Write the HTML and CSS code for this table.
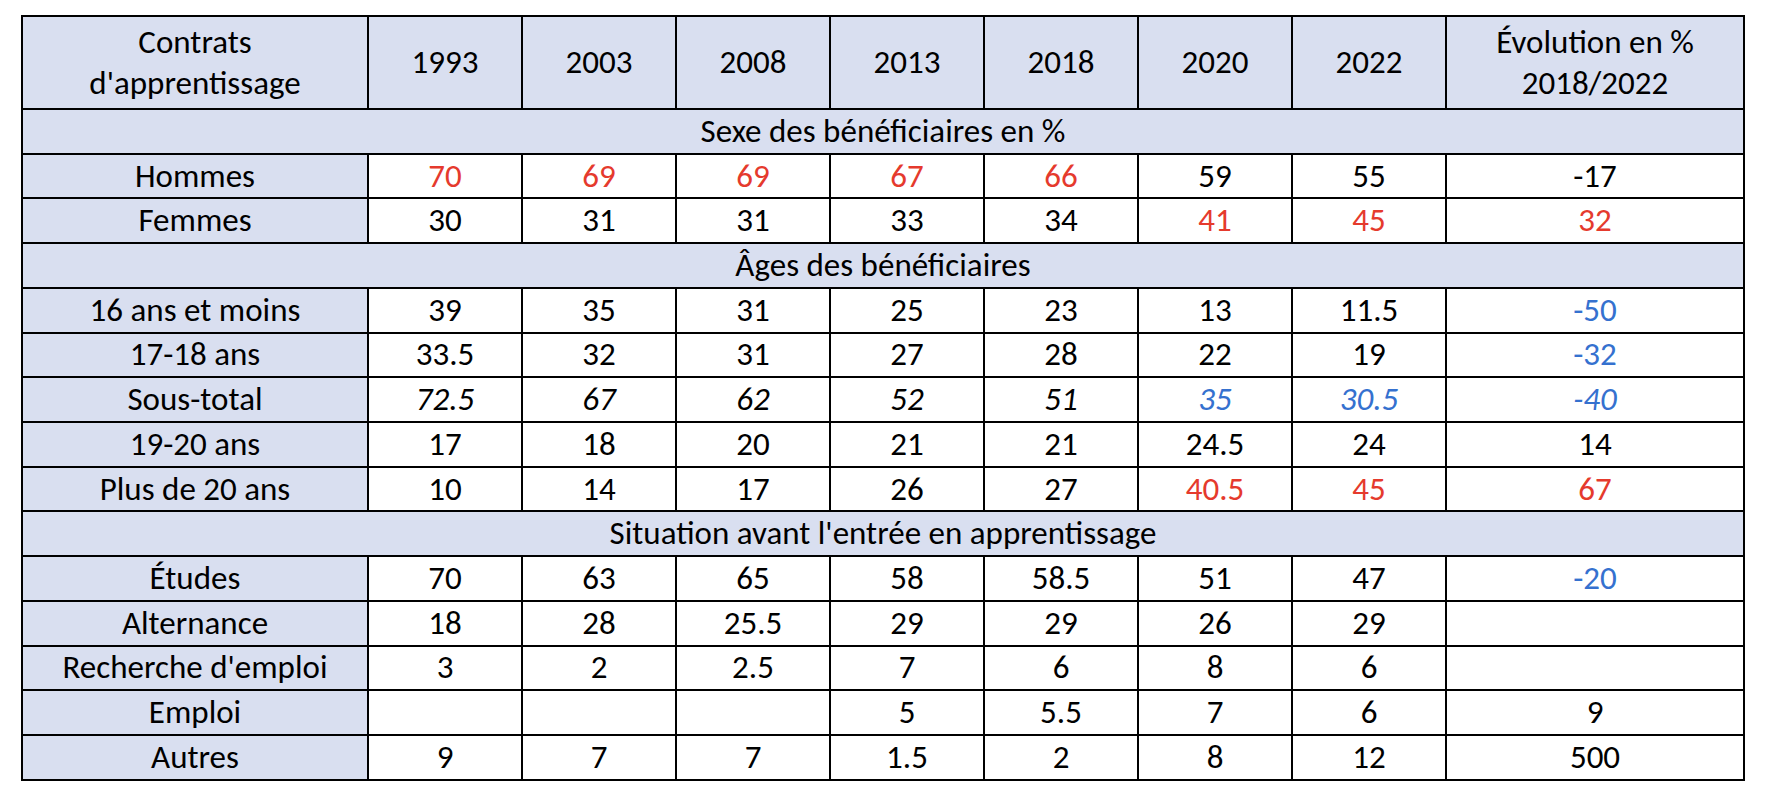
FILE: index.html
```html
<!DOCTYPE html>
<html lang="fr">
<head>
<meta charset="utf-8">
<title>Contrats d'apprentissage</title>
<link rel="stylesheet" href="styles.css">
</head>
<body>
<table class="stats">
  <colgroup>
    <col class="c-label">
    <col class="c-year">
    <col class="c-year">
    <col class="c-year">
    <col class="c-year">
    <col class="c-year">
    <col class="c-year">
    <col class="c-year">
    <col class="c-evol">
  </colgroup>
  <thead>
    <tr class="head">
      <th>Contrats<br>d'apprentissage</th>
      <th>1993</th>
      <th>2003</th>
      <th>2008</th>
      <th>2013</th>
      <th>2018</th>
      <th>2020</th>
      <th>2022</th>
      <th>Évolution en %<br>2018/2022</th>
    </tr>
  </thead>
  <tbody>
    <tr class="section"><td colspan="9">Sexe des bénéficiaires en %</td></tr>
    <tr>
      <th>Hommes</th>
      <td class="red">70</td><td class="red">69</td><td class="red">69</td><td class="red">67</td><td class="red">66</td><td>59</td><td>55</td><td>-17</td>
    </tr>
    <tr>
      <th>Femmes</th>
      <td>30</td><td>31</td><td>31</td><td>33</td><td>34</td><td class="red">41</td><td class="red">45</td><td class="red">32</td>
    </tr>
    <tr class="section"><td colspan="9">Âges des bénéficiaires</td></tr>
    <tr>
      <th>16 ans et moins</th>
      <td>39</td><td>35</td><td>31</td><td>25</td><td>23</td><td>13</td><td>11.5</td><td class="blue">-50</td>
    </tr>
    <tr>
      <th>17-18 ans</th>
      <td>33.5</td><td>32</td><td>31</td><td>27</td><td>28</td><td>22</td><td>19</td><td class="blue">-32</td>
    </tr>
    <tr class="subtotal">
      <th>Sous-total</th>
      <td>72.5</td><td>67</td><td>62</td><td>52</td><td>51</td><td class="blue">35</td><td class="blue">30.5</td><td class="blue">-40</td>
    </tr>
    <tr>
      <th>19-20 ans</th>
      <td>17</td><td>18</td><td>20</td><td>21</td><td>21</td><td>24.5</td><td>24</td><td>14</td>
    </tr>
    <tr>
      <th>Plus de 20 ans</th>
      <td>10</td><td>14</td><td>17</td><td>26</td><td>27</td><td class="red">40.5</td><td class="red">45</td><td class="red">67</td>
    </tr>
    <tr class="section"><td colspan="9">Situation avant l'entrée en apprentissage</td></tr>
    <tr>
      <th>Études</th>
      <td>70</td><td>63</td><td>65</td><td>58</td><td>58.5</td><td>51</td><td>47</td><td class="blue">-20</td>
    </tr>
    <tr>
      <th>Alternance</th>
      <td>18</td><td>28</td><td>25.5</td><td>29</td><td>29</td><td>26</td><td>29</td><td></td>
    </tr>
    <tr>
      <th>Recherche d'emploi</th>
      <td>3</td><td>2</td><td>2.5</td><td>7</td><td>6</td><td>8</td><td>6</td><td></td>
    </tr>
    <tr>
      <th>Emploi</th>
      <td></td><td></td><td></td><td>5</td><td>5.5</td><td>7</td><td>6</td><td>9</td>
    </tr>
    <tr>
      <th>Autres</th>
      <td>9</td><td>7</td><td>7</td><td>1.5</td><td>2</td><td>8</td><td>12</td><td>500</td>
    </tr>
  </tbody>
</table>
</body>
</html>
```
FILE: styles.css
```css
html, body {
  margin: 0;
  padding: 0;
  background: #ffffff;
}

body {
  padding: 15px 0 0 21px;
  font-family: Carlito, Calibri, Lato, "Liberation Sans", sans-serif;
  font-size: 33px;
  color: #000000;
}

.stats {
  border-collapse: collapse;
  table-layout: fixed;
  width: 1722px;
}

.c-label { width: 346px; }
.c-year { width: 154px; }
.c-evol { width: 298px; }

.stats th,
.stats td {
  border: 2px solid #000000;
  padding: 0;
  text-align: center;
  vertical-align: middle;
  font-weight: normal;
  white-space: nowrap;
  line-height: 1;
}

.stats th {
  background: #d9dff0;
}

.stats td {
  background: #ffffff;
}

.head th {
  height: 91px;
  line-height: 41px;
}

.stats tbody tr {
  height: 44.73px;
}

.stats tr.section td {
  background: #d9dff0;
}

.subtotal td {
  font-style: italic;
}

.red {
  color: #e53a2d;
}

.blue {
  color: #3571cf;
}
```
